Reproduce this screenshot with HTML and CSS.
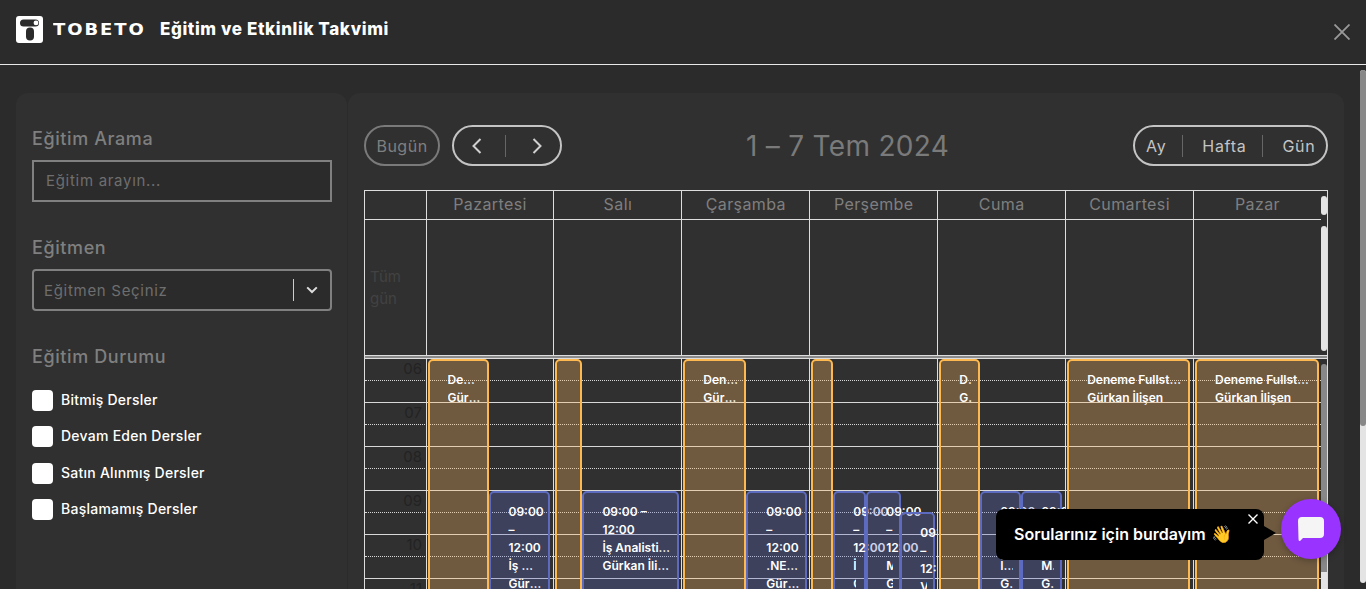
FILE: index.html
```html
<!DOCTYPE html>
<html>

<head>
    <title>Eğitim ve Etkinlik Takvimi</title>
    <link rel="stylesheet" href="styles.css">
</head>

<body>
    <header class="topbar">
        <svg class="logo-icon" viewBox="0 0 27 27">
            <rect width="27" height="27" rx="3" fill="#fff" />
            <rect x="4" y="3.4" width="19" height="7" rx="3.5" fill="#2b2b2b" />
            <circle cx="20" cy="6.9" r="2.4" fill="#fff" />
            <rect x="10" y="11.4" width="8" height="13" rx="4" fill="#2b2b2b" />
        </svg>
        <span class="logo-text">TOBETO</span>
        <h1 class="topbar-title">Eğitim ve Etkinlik Takvimi</h1>
        <svg class="close-icon" viewBox="0 0 16 16">
            <path d="M0.5 0.5 L15.5 15.5 M15.5 0.5 L0.5 15.5" stroke="#9a9a9a" stroke-width="1.8" />
        </svg>
    </header>

    <div class="content">
        <aside class="sidebar">
            <h2 class="filter-title">Eğitim Arama</h2>
            <div class="search-box">Eğitim arayın...</div>

            <h2 class="filter-title">Eğitmen</h2>
            <div class="select-box">
                <span class="select-text">Eğitmen Seçiniz</span>
                <span class="select-sep"></span>
                <svg class="select-arrow" viewBox="0 0 12 8">
                    <path d="M1.2 1.4 L6 6 L10.8 1.4" fill="none" stroke="#ddd" stroke-width="2" />
                </svg>
            </div>

            <h2 class="filter-title">Eğitim Durumu</h2>
            <div class="check-list">
                <label class="check-row"><span class="check-box"></span>Bitmiş Dersler</label>
                <label class="check-row"><span class="check-box"></span>Devam Eden Dersler</label>
                <label class="check-row"><span class="check-box"></span>Satın Alınmış Dersler</label>
                <label class="check-row"><span class="check-box"></span>Başlamamış Dersler</label>
            </div>
        </aside>

        <main class="calendar-panel">
            <div class="toolbar">
                <div class="toolbar-left">
                    <button class="today-btn">Bugün</button>
                    <div class="pill-group nav-group">
                        <svg class="nav-arrow" viewBox="0 0 10 16">
                            <path d="M8.5 1 L1.5 8 L8.5 15" fill="none" stroke="#d0d0d0" stroke-width="2" />
                        </svg>
                        <span class="pill-sep"></span>
                        <svg class="nav-arrow" viewBox="0 0 10 16">
                            <path d="M1.5 1 L8.5 8 L1.5 15" fill="none" stroke="#d0d0d0" stroke-width="2" />
                        </svg>
                    </div>
                </div>
                <div class="range-title">1 – 7 Tem 2024</div>
                <div class="pill-group view-group">
                    <span>Ay</span>
                    <span class="pill-sep"></span>
                    <span>Hafta</span>
                    <span class="pill-sep"></span>
                    <span>Gün</span>
                </div>
            </div>

            <div class="calendar">
                <div class="cal-row">
                    <div class="cal-cells head-cells">
                        <div class="axis-cell"></div>
                        <div class="head-cell">Pazartesi</div>
                        <div class="head-cell">Salı</div>
                        <div class="head-cell">Çarşamba</div>
                        <div class="head-cell">Perşembe</div>
                        <div class="head-cell">Cuma</div>
                        <div class="head-cell">Cumartesi</div>
                        <div class="head-cell">Pazar</div>
                    </div>
                    <div class="cal-gutter"><span class="pill-bar head-bar"></span></div>
                </div>

                <div class="cal-row">
                    <div class="cal-cells allday-cells">
                        <div class="axis-cell allday-label">Tüm<br>gün</div>
                        <div class="allday-cell"></div>
                        <div class="allday-cell"></div>
                        <div class="allday-cell"></div>
                        <div class="allday-cell"></div>
                        <div class="allday-cell"></div>
                        <div class="allday-cell"></div>
                        <div class="allday-cell"></div>
                    </div>
                    <div class="cal-gutter"><span class="pill-bar allday-bar"></span></div>
                </div>

                <div class="divider"></div>

                <div class="cal-row">
                    <div class="time-body">
                        <div class="slot"><span class="hour-label">06</span></div>
                        <div class="slot hour-end"></div>
                        <div class="slot"><span class="hour-label">07</span></div>
                        <div class="slot hour-end"></div>
                        <div class="slot"><span class="hour-label">08</span></div>
                        <div class="slot hour-end"></div>
                        <div class="slot"><span class="hour-label">09</span></div>
                        <div class="slot hour-end"></div>
                        <div class="slot"><span class="hour-label">10</span></div>
                        <div class="slot hour-end"></div>
                        <div class="slot"><span class="hour-label">11</span></div>
                        <div class="slot hour-end"></div>

                        <div class="cal-cells day-cols">
                            <div></div>
                            <div class="day-col">
                                <div class="event gold w-61">
                                    <p class="ev-title">Deneme Fullstack</p>
                                    <p class="ev-title">Gürkan İlişen</p>
                                </div>
                                <div class="event blue w-61">
                                    <p class="ev-time">09:00 – 12:00</p>
                                    <p class="ev-title">İş Analisti Eğitimi</p>
                                    <p class="ev-title">Gürkan İlişen</p>
                                </div>
                            </div>
                            <div class="day-col">
                                <div class="event gold slim w-27"></div>
                                <div class="event blue w-97">
                                    <p class="ev-time">09:00 – 12:00</p>
                                    <p class="ev-title">İş Analisti Eğitimi</p>
                                    <p class="ev-title">Gürkan İlişen</p>
                                </div>
                            </div>
                            <div class="day-col">
                                <div class="event gold w-63">
                                    <p class="ev-title">Deneme Fullstack</p>
                                    <p class="ev-title">Gürkan İlişen</p>
                                </div>
                                <div class="event blue w-61">
                                    <p class="ev-time">09:00 – 12:00</p>
                                    <p class="ev-title">.NET &amp; React</p>
                                    <p class="ev-title">Gürkan İlişen</p>
                                </div>
                            </div>
                            <div class="day-col">
                                <div class="event gold slim w-22"></div>
                                <div class="event blue w-33">
                                    <p class="ev-time">09:00 – 12:00</p>
                                    <p class="ev-title">İş Analisti</p>
                                    <p class="ev-title">Gürkan İlişen</p>
                                </div>
                                <div class="event blue w-35">
                                    <p class="ev-time">09:00 – 12:00</p>
                                    <p class="ev-title">Mobil</p>
                                    <p class="ev-title">Gürkan İlişen</p>
                                </div>
                                <div class="event blue w-35 later">
                                    <p class="ev-time">09:00 – 12:00</p>
                                    <p class="ev-title">Veri Bilimi</p>
                                </div>
                            </div>
                            <div class="day-col">
                                <div class="event gold w-41">
                                    <p class="ev-title">Deneme Fullstack</p>
                                    <p class="ev-title">Gürkan İlişen</p>
                                </div>
                                <div class="event blue w-41">
                                    <p class="ev-time">09:00 – 12:00</p>
                                    <p class="ev-title">İş Analisti</p>
                                    <p class="ev-title">Gürkan İlişen</p>
                                </div>
                                <div class="event blue w-41">
                                    <p class="ev-time">09:00 – 12:00</p>
                                    <p class="ev-title">Mobil</p>
                                    <p class="ev-title">Gürkan İlişen</p>
                                </div>
                            </div>
                            <div class="day-col">
                                <div class="event gold w-123">
                                    <p class="ev-title">Deneme Fullstack</p>
                                    <p class="ev-title">Gürkan İlişen</p>
                                </div>
                            </div>
                            <div class="day-col">
                                <div class="event gold w-124">
                                    <p class="ev-title">Deneme Fullstack</p>
                                    <p class="ev-title">Gürkan İlişen</p>
                                </div>
                            </div>
                        </div>
                    </div>
                    <div class="cal-gutter"><span class="pill-bar time-bar"></span></div>
                </div>
            </div>
        </main>

        <div class="page-scroll"><span class="page-thumb"></span></div>
    </div>

    <div class="chat-tip">
        Sorularınız için burdayım <span class="tip-emoji">👋</span>
        <svg class="tip-close" viewBox="0 0 10 10">
            <path d="M0.5 0.5 L9.5 9.5 M9.5 0.5 L0.5 9.5" stroke="#fff" stroke-width="1.4" />
        </svg>
    </div>
    <div class="chat-btn">
        <svg class="chat-icon" viewBox="0 0 26 24">
            <path d="M4 0 H22 Q26 0 26 4 V17 Q26 21 22 21 H5 L2 24 Q0.5 24.5 0.5 22 L0 4 Q0 0 4 0 Z" fill="#f5f5f5" />
        </svg>
    </div>
</body>

</html>
```

FILE: styles.css
```css
* {
    box-sizing: border-box;
}

html,
body {
    height: 100%;
}

body {
    margin: 0;
    display: flex;
    flex-direction: column;
    overflow: hidden;
    background-color: #2b2b2b;
    color: #fff;
    font-family: "Inter", "Noto Sans", sans-serif;
}

/* top bar */
.topbar {
    display: flex;
    align-items: center;
    flex: none;
    height: 65px;
    padding: 0 16px 5px;
    border-bottom: 1px solid #e8e8e8;
}

.logo-icon {
    width: 27px;
    height: 27px;
    margin-right: 10px;
}

.logo-text {
    width: 107px;
    font-family: "DejaVu Sans", sans-serif;
    font-size: 15px;
    font-weight: 700;
    letter-spacing: 1.6px;
    transform: scaleX(1.2);
    transform-origin: left center;
}

.topbar-title {
    margin: 0 0 2px;
    font-size: 17px;
    font-weight: 800;
    letter-spacing: 0.6px;
}

.close-icon {
    width: 16px;
    height: 16px;
    margin-left: auto;
    margin-top: 4px;
}

/* page body */
.content {
    display: flex;
    flex: 1;
    min-height: 0;
    padding: 28px 0 0 16px;
    overflow: hidden;
}

.sidebar {
    flex: none;
    width: 331px;
    padding: 33px 15px 0 16px;
    background-color: #303030;
    border-radius: 12px 12px 0 0;
}

.filter-title {
    margin: 0;
    font-size: 18px;
    line-height: 26px;
    font-weight: 500;
    letter-spacing: 0.6px;
    color: #7f7f7f;
}

.search-box {
    height: 42px;
    margin: 8px 0 33px;
    padding-left: 12px;
    line-height: 38px;
    font-size: 15px;
    letter-spacing: 0.7px;
    color: #6e6e6e;
    background-color: #2b2b2b;
    border: 2px solid #808080;
}

.select-box {
    display: flex;
    align-items: center;
    height: 42px;
    margin: 8px 0 33px;
    padding-left: 10px;
    font-size: 15px;
    letter-spacing: 0.7px;
    color: #6e6e6e;
    background-color: #2b2b2b;
    border: 2px solid #808080;
    border-radius: 4px;
}

.select-text {
    flex: 1;
}

.select-sep {
    width: 1px;
    height: 22px;
    background-color: #ccc;
}

.select-arrow {
    width: 12px;
    height: 8px;
    margin: 0 12px;
}

.check-list {
    margin-top: 20px;
}

.check-row {
    display: flex;
    align-items: flex-start;
    height: 21px;
    margin-bottom: 15.3px;
    font-size: 14px;
    line-height: 19px;
    font-weight: 500;
    letter-spacing: 0.25px;
}

.check-box {
    width: 21px;
    height: 21px;
    margin-right: 8px;
    background-color: #fff;
    border-radius: 4px;
}

/* calendar */
.calendar-panel {
    flex: none;
    width: 996px;
    margin-left: 1px;
    padding: 32px 16px 0;
    background-color: #303030;
    border-radius: 12px 12px 0 0;
}

.toolbar {
    display: flex;
    justify-content: space-between;
    align-items: center;
    height: 41px;
    margin-bottom: 24px;
}

.toolbar-left {
    display: flex;
    gap: 12px;
}

.today-btn {
    width: 76px;
    height: 41px;
    padding: 0;
    font-family: inherit;
    font-size: 16px;
    letter-spacing: 0.5px;
    color: #7f7f7f;
    background: none;
    border: 2px solid #7a7a7a;
    border-radius: 21px;
}

.pill-group {
    display: flex;
    align-items: center;
    height: 41px;
    font-size: 16px;
    letter-spacing: 0.7px;
    color: #c4c4c4;
    border: 2px solid #c4c4c4;
    border-radius: 21px;
}

.pill-sep {
    width: 1px;
    height: 22px;
    background-color: #666;
}

.nav-group {
    width: 110px;
    padding: 0 18px;
    justify-content: space-between;
}

.nav-group .pill-sep {
    margin-right: 4px;
}

.nav-arrow {
    width: 10px;
    height: 16px;
}

.view-group {
    width: 195px;
    padding: 0 0 0 11px;
}

.view-group .pill-sep {
    margin: 0 19px 0 16px;
}

.range-title {
    font-size: 28px;
    letter-spacing: 0.3px;
    color: #7a7a7a;
}

.calendar {
    border: 1px solid #ddd;
    border-bottom: none;
}

.cal-row {
    display: flex;
}

.cal-gutter {
    flex: none;
    width: 6px;
}

.cal-cells {
    display: grid;
    flex: 1;
    grid-template-columns: 60.5px repeat(7, 1fr);
}

.head-cells {
    height: 29px;
    border-bottom: 1px solid #ddd;
}

.head-cell {
    font-size: 16px;
    line-height: 27px;
    letter-spacing: 0.4px;
    text-align: center;
    color: #7f7f7f;
    border-left: 1px solid #ddd;
}

.allday-cells {
    height: 135px;
}

.allday-cell {
    border-left: 1px solid #ddd;
}

.allday-label {
    padding: 46px 0 0 5px;
    font-size: 15px;
    line-height: 22px;
    color: #424242;
}

.pill-bar {
    display: block;
    background-color: #e4e4e4;
    border-radius: 3px;
}

.head-bar {
    height: 19px;
    margin-top: 5px;
}

.allday-bar {
    height: 125px;
    margin-top: 6px;
}

.time-bar {
    height: 240px;
    margin-top: 5px;
    background: linear-gradient(#888 208px, #e4e4e4 208px);
}

.divider {
    height: 4px;
    background-color: #8a8a8a;
    border-top: 1px solid #ddd;
    border-bottom: 1px solid #ddd;
}

.time-body {
    position: relative;
    flex: 1;
}

.slot {
    display: flex;
    justify-content: flex-end;
    height: 22px;
    padding-right: 895px;
    border-bottom: 1px dotted #d8d8d8;
}

.slot.hour-end {
    border-bottom: 1px solid #d8d8d8;
}

.hour-label {
    padding-right: 4px;
    font-size: 15px;
    line-height: 20px;
    color: #232323;
}

.day-cols {
    position: absolute;
    top: 0;
    left: 0;
    width: 100%;
    height: 100%;
}

.day-col {
    display: flex;
    align-items: flex-start;
    padding-left: 1px;
    border-left: 1px solid #ddd;
    overflow: hidden;
}

.event {
    flex: none;
    padding: 10px 6px 0 18px;
    font-size: 12px;
    line-height: 18px;
    font-weight: 600;
    border: 2px solid;
    border-radius: 5px;
}

.event.gold {
    height: 600px;
    background-color: rgba(253, 185, 100, 0.31);
    border-color: #fdb94f;
}

.event.slim {
    padding: 0;
}

.event.blue {
    height: 132px;
    margin-top: 132px;
    background-color: rgba(92, 107, 192, 0.3);
    border-color: #5c6bc0;
}

.event.blue.later {
    margin-top: 153px;
    margin-left: -1px;
}

.event p {
    margin: 0;
}

.ev-title {
    white-space: nowrap;
    overflow: hidden;
    text-overflow: ellipsis;
}

.w-22 { width: 22px; }
.w-27 { width: 27px; }
.w-33 { width: 33px; padding-right: 8px; }
.w-35 { width: 35px; }
.w-41 { width: 41px; }
.w-61 { width: 61px; }
.w-63 { width: 63px; }
.w-97 { width: 97px; }
.w-123 { width: 123px; }
.w-124 { width: 124px; }

/* page scrollbar */
.page-scroll {
    flex: none;
    width: 6px;
    height: 513px;
    margin: -23px 0 0 16px;
    background-color: #e4e4e4;
    border-radius: 3px;
}

.page-thumb {
    display: block;
    height: 356px;
    background-color: #888;
    border-radius: 3px;
}

/* chat widget */
.chat-tip {
    position: fixed;
    left: 996px;
    top: 509px;
    width: 268px;
    height: 51px;
    padding-left: 18px;
    line-height: 51px;
    font-size: 16px;
    font-weight: 600;
    color: #fff;
    background-color: #000;
    border-radius: 8px;
}

.tip-emoji {
    margin-left: 1px;
    font-size: 17px;
}

.chat-tip::after {
    content: "";
    position: absolute;
    left: 100%;
    top: 17px;
    border-top: 7.5px solid transparent;
    border-bottom: 7.5px solid transparent;
    border-left: 12px solid #000;
}

.tip-close {
    position: absolute;
    top: 5px;
    right: 6px;
    width: 10px;
    height: 10px;
}

.chat-btn {
    position: fixed;
    left: 1281px;
    top: 499px;
    display: flex;
    align-items: center;
    justify-content: center;
    width: 60px;
    height: 60px;
    background-color: #9933ff;
    border-radius: 50%;
    box-shadow: 0 2px 6px rgba(0, 0, 0, 0.25);
}

.chat-icon {
    width: 26px;
    height: 24px;
}
```
